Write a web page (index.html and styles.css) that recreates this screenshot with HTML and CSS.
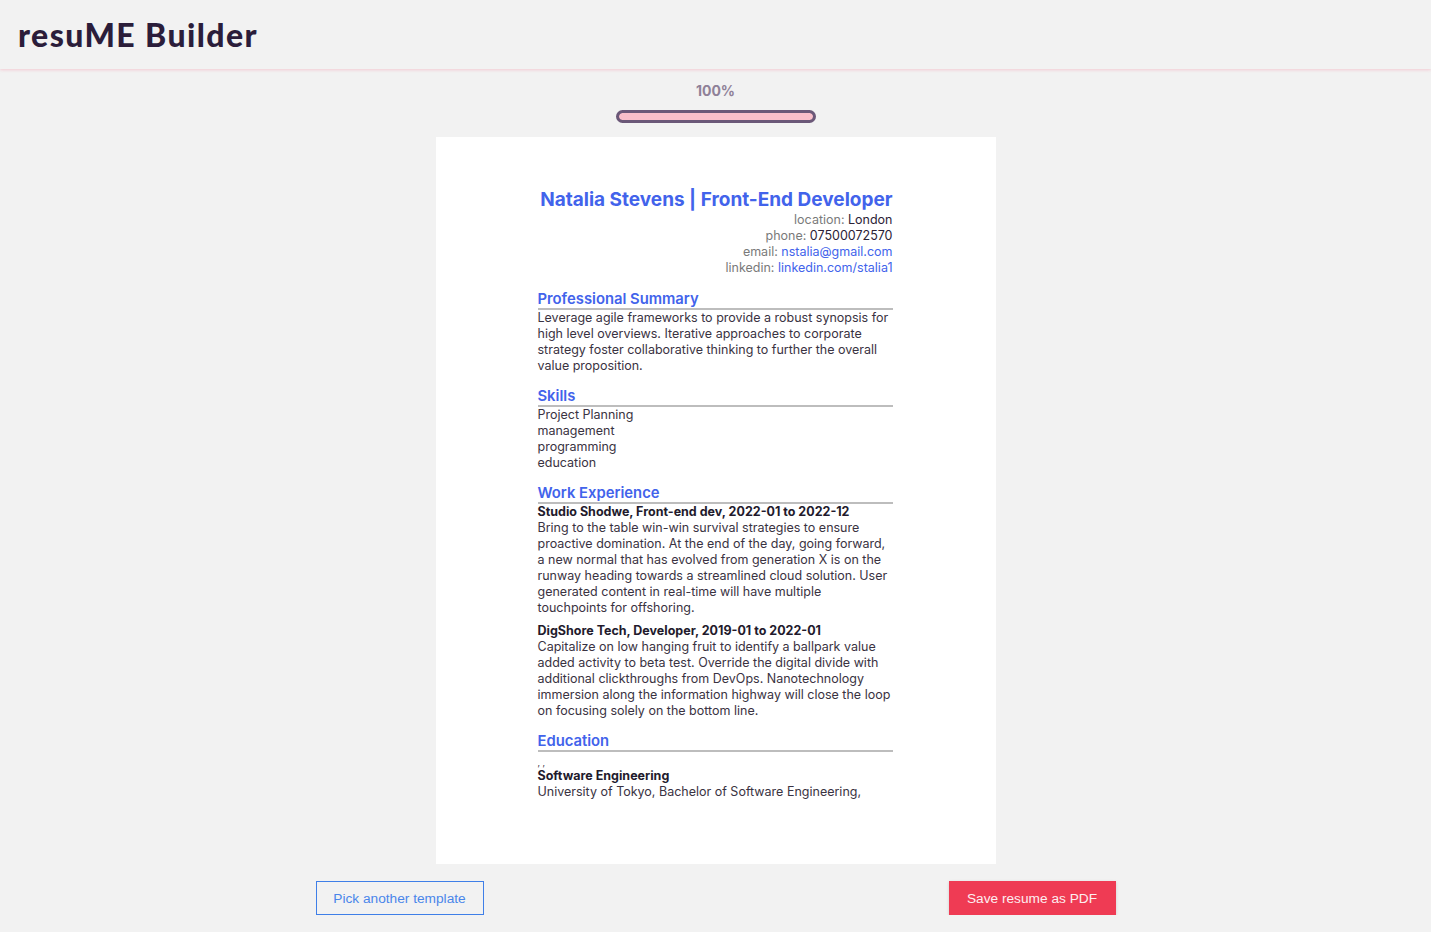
FILE: index.html
```html
<!DOCTYPE html>
<html lang="en">
<head>
<meta charset="utf-8">
<title>resuME Builder</title>
<link rel="stylesheet" href="styles.css">
</head>
<body>
<header class="topbar">
  <h1 class="brand">resuME Builder</h1>
</header>
<main class="main">
  <div class="progress">
    <div class="progress-label">100%</div>
    <div class="progress-track"><div class="progress-fill" style="width:100%"></div></div>
  </div>
  <article class="resume">
    <div class="resume-head">
      <h2 class="resume-name">Natalia Stevens | Front-End Developer</h2>
      <div class="contact"><span class="label">location:</span> London</div>
      <div class="contact"><span class="label">phone:</span> 07500072570</div>
      <div class="contact"><span class="label">email:</span> <a class="link" href="#">nstalia@gmail.com</a></div>
      <div class="contact"><span class="label">linkedin:</span> <a class="link" href="#">linkedin.com/stalia1</a></div>
    </div>
    <section class="section">
      <h3 class="section-title">Professional Summary</h3>
      <p class="text">Leverage agile frameworks to provide a robust synopsis for high level overviews. Iterative approaches to corporate strategy foster collaborative thinking to further the overall value proposition.</p>
    </section>
    <section class="section">
      <h3 class="section-title">Skills</h3>
      <ul class="skills">
        <li>Project Planning</li>
        <li>management</li>
        <li>programming</li>
        <li>education</li>
      </ul>
    </section>
    <section class="section">
      <h3 class="section-title">Work Experience</h3>
      <div class="job">
        <div class="job-title">Studio Shodwe, Front-end dev, 2022-01 to 2022-12</div>
        <p class="text">Bring to the table win-win survival strategies to ensure proactive domination. At the end of the day, going forward, a new normal that has evolved from generation X is on the runway heading towards a streamlined cloud solution. User generated content in real-time will have multiple touchpoints for offshoring.</p>
      </div>
      <div class="job">
        <div class="job-title">DigShore Tech, Developer, 2019-01 to 2022-01</div>
        <p class="text">Capitalize on low hanging fruit to identify a ballpark value added activity to beta test. Override the digital divide with additional clickthroughs from DevOps. Nanotechnology immersion along the information highway will close the loop on focusing solely on the bottom line.</p>
      </div>
    </section>
    <section class="section">
      <h3 class="section-title">Education</h3>
      <div class="edu-dates">, ,</div>
      <div class="job-title">Software Engineering</div>
      <p class="text">University of Tokyo, Bachelor of Software Engineering,</p>
    </section>
  </article>
  <div class="actions">
    <button class="btn btn-outline">Pick another template</button>
    <button class="btn btn-primary">Save resume as PDF</button>
  </div>
</main>
</body>
</html>
```

FILE: styles.css
```css
* { box-sizing: border-box; }
html, body { margin: 0; padding: 0; }
body {
  background: #f2f2f2;
  font-family: Inter, "Liberation Sans", sans-serif;
  color: #2b2236;
}
.topbar {
  height: 69px;
  display: flex;
  align-items: center;
  padding-left: 18px;
  background: #f2f2f2;
  box-shadow: 0 1px 3px rgba(245, 170, 185, 0.55);
  position: relative;
}
.brand {
  margin: 0;
  font-family: Lato, "Liberation Sans", sans-serif;
  font-weight: 900;
  font-size: 32px;
  letter-spacing: 1.4px;
  color: #2b1d3a;
}
.main {
  display: flex;
  flex-direction: column;
  align-items: center;
  padding-top: 13px;
}
.progress {
  display: flex;
  flex-direction: column;
  align-items: center;
}
.progress-label {
  font-size: 14px;
  font-weight: 700;
  color: #8f8198;
  line-height: 17px;
}
.progress-track {
  margin-top: 11px;
  width: 200px;
  height: 13px;
  border: 3px solid #6b5878;
  border-radius: 7px;
  background: #6b5878;
  overflow: hidden;
}
.progress-fill {
  height: 100%;
  background: #f9bfca;
  border-radius: 5px;
}
.resume {
  margin-top: 14px;
  width: 560px;
  min-height: 727px;
  background: #fff;
  padding: 51px 103px 40px 102px;
  font-size: 12.5px;
  line-height: 16px;
}
.resume-head {
  text-align: right;
  padding-bottom: 1px;
}
.resume-name {
  margin: 0;
  font-size: 19px;
  line-height: 24px;
  font-weight: 700;
  color: #4263eb;
  white-space: nowrap;
}
.contact { color: #2b2236; }
.label { color: #7a7a7a; }
.link { color: #4263eb; text-decoration: none; }
.section { margin-top: 14px; }
.section-title {
  margin: 0;
  font-size: 14.8px;
  line-height: 16px;
  font-weight: 600;
  color: #4263eb;
  border-bottom: 2px solid #bdbdbd;
  padding-bottom: 1px;
}
.text { margin: 0; color: #3a3342; }
.skills { list-style: none; margin: 0; padding: 0; color: #3a3342; }
.job + .job { margin-top: 7px; }
.job-title { font-weight: 700; color: #221a2c; }
.edu-dates { font-size: 9px; line-height: 10px; margin-top: 6px; color: #3a3342; }
.actions {
  width: 800px;
  margin-top: 17px;
  display: flex;
  justify-content: space-between;
}
.btn {
  height: 34px;
  padding: 0;
  font-family: "Liberation Sans", Arial, sans-serif;
  font-size: 13.7px;
  white-space: nowrap;
  cursor: pointer;
}
.btn-outline {
  width: 168px;
  background: transparent;
  border: 1px solid #3f7fe8;
  color: #4a86ea;
}
.btn-primary {
  width: 167px;
  background: #ef3b54;
  border: none;
  color: #fdeef0;
  box-shadow: 0 1px 3px rgba(0,0,0,0.15);
}
```
